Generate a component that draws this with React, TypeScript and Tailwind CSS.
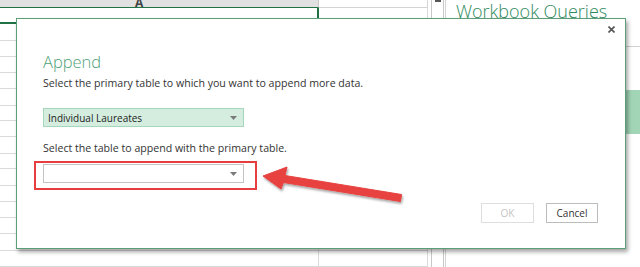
import React from "react"

const rowHeights = [17, 17, 17, 16, 17, 17, 16, 17, 17, 16, 17, 17, 16, 17, 17, 17]

function Caret() {
    return (
        <svg width="7" height="4" viewBox="0 0 7 4" className="shrink-0">
            <path d="M0 0 H7 L3.5 4 Z" fill="#7a7a7a" />
        </svg>
    )
}

function Sheet() {
    return (
        <div className="flex flex-col w-[428px] shrink-0">
            {/* column headers, cropped at the top */}
            <div className="flex h-[8px]">
                <div className="w-[319px] h-[8px] bg-[#e1e1e1] border-b border-b-[#217346] border-r border-r-[#c6c6c6] overflow-hidden flex items-end pl-[135px]">
                    <span className="text-[12px] leading-none font-bold text-[#444] mb-[-2px]">A</span>
                </div>
                <div className="w-[109px] h-[8px] bg-white border-b border-r border-[#d4d4d4]" />
            </div>
            {rowHeights.map((h, i) => (
                <div key={i} className="flex" style={{ height: h }}>
                    {i === 0 ? (
                        <div className="w-[319px] h-full border-b-2 border-r-2 border-[#217346]" />
                    ) : (
                        <div className="w-[319px] h-full border-b border-r border-[#dadada]" />
                    )}
                    <div className="w-[109px] h-full border-b border-r border-[#dadada]" />
                </div>
            ))}
        </div>
    )
}

function Scrollbar() {
    return (
        <div className="w-[17px] shrink-0 bg-white pl-[3px]">
            <div className="w-[13px] h-full border-x border-[#c8c8c8] flex justify-center">
                <div className="w-[6px] h-[2px] bg-[#555]" />
            </div>
        </div>
    )
}

function QueriesPane() {
    return (
        <div className="flex-1 bg-white border-l border-[#d4d4d4] flex flex-col">
            <div className="h-[47px] border-b border-[#d0d0d0] pl-[10px] pt-[2px]">
                <div className="text-[18px] leading-[18px] font-light text-[#2f8a5e]">Workbook Queries</div>
            </div>
            <div className="mt-[43px] h-[44px] bg-[#a2d5b6]" />
        </div>
    )
}

function AppendDialog() {
    return (
        <div className="absolute left-[16px] top-[18px] w-[610px] h-[231px] bg-white border border-[#5b9e78] shadow-[2px_3px_4px_rgba(0,0,0,0.35)] flex flex-col">
            <div className="h-[20px] flex items-center justify-end pr-[10px]">
                <svg width="7" height="7" viewBox="0 0 7 7">
                    <path d="M0.5 0.5 L6.5 6.5 M6.5 0.5 L0.5 6.5" stroke="#555" strokeWidth="1.6" />
                </svg>
            </div>

            <div className="pl-[26px] flex flex-col">
                <div className="mt-[14px] text-[16.5px] leading-[18px] font-light text-[#4e9f78]">Append</div>

                <div className="mt-[4px] text-[10.6px] leading-[16px] text-[#333]">
                    Select the primary table to which you want to append more data.
                </div>

                <div className="mt-[17px] w-[201px] h-[19px] bg-[#d4eddf] border border-[#a6d7ba] flex items-center justify-between pl-[4px] pr-[6px]">
                    <span className="text-[10px] leading-none text-[#222]">Individual Laureates</span>
                    <Caret />
                </div>

                <div className="mt-[13px] text-[10.6px] leading-[16px] text-[#333]">
                    Select the table to append with the primary table.
                </div>

                <div className="mt-[8px] w-[201px] h-[19px] bg-white border border-[#c4c4c4] flex items-center justify-end pr-[6px]">
                    <Caret />
                </div>
            </div>

            <div className="mt-[20px] flex justify-end gap-[12px] pr-[27px]">
                <button className="w-[53px] h-[20px] border border-[#dedede] bg-white text-[10px] text-[#c4c4c4]">OK</button>
                <button className="w-[52px] h-[20px] border border-[#bcbcbc] bg-white text-[10px] text-[#333]">Cancel</button>
            </div>
        </div>
    )
}

export default function App() {
    return (
        <div className="relative w-[640px] h-[267px] overflow-hidden bg-white font-['Open_Sans',sans-serif]">
            <div className="flex h-full">
                <Sheet />
                <Scrollbar />
                <QueriesPane />
            </div>

            <AppendDialog />

            {/* annotation: red box + arrow */}
            <div className="absolute left-[34px] top-[161px] w-[223px] h-[29px] border-2 border-[#e63e3e]" />
            <svg className="absolute left-0 top-0 pointer-events-none" width="640" height="267" viewBox="0 0 640 267">
                <defs>
                    <filter id="arrowShadow" x="-10%" y="-30%" width="130%" height="180%">
                        <feDropShadow dx="1" dy="2" stdDeviation="1.2" floodColor="#000" floodOpacity="0.35" />
                    </filter>
                </defs>
                <polygon
                    points="263,176 287,167 285,175.5 401.6,194.5 400.4,201.5 283.5,182.5 281,189"
                    fill="#e8423f"
                    stroke="#e8423f"
                    strokeWidth="1"
                    strokeLinejoin="round"
                    filter="url(#arrowShadow)"
                />
            </svg>
        </div>
    )
}
